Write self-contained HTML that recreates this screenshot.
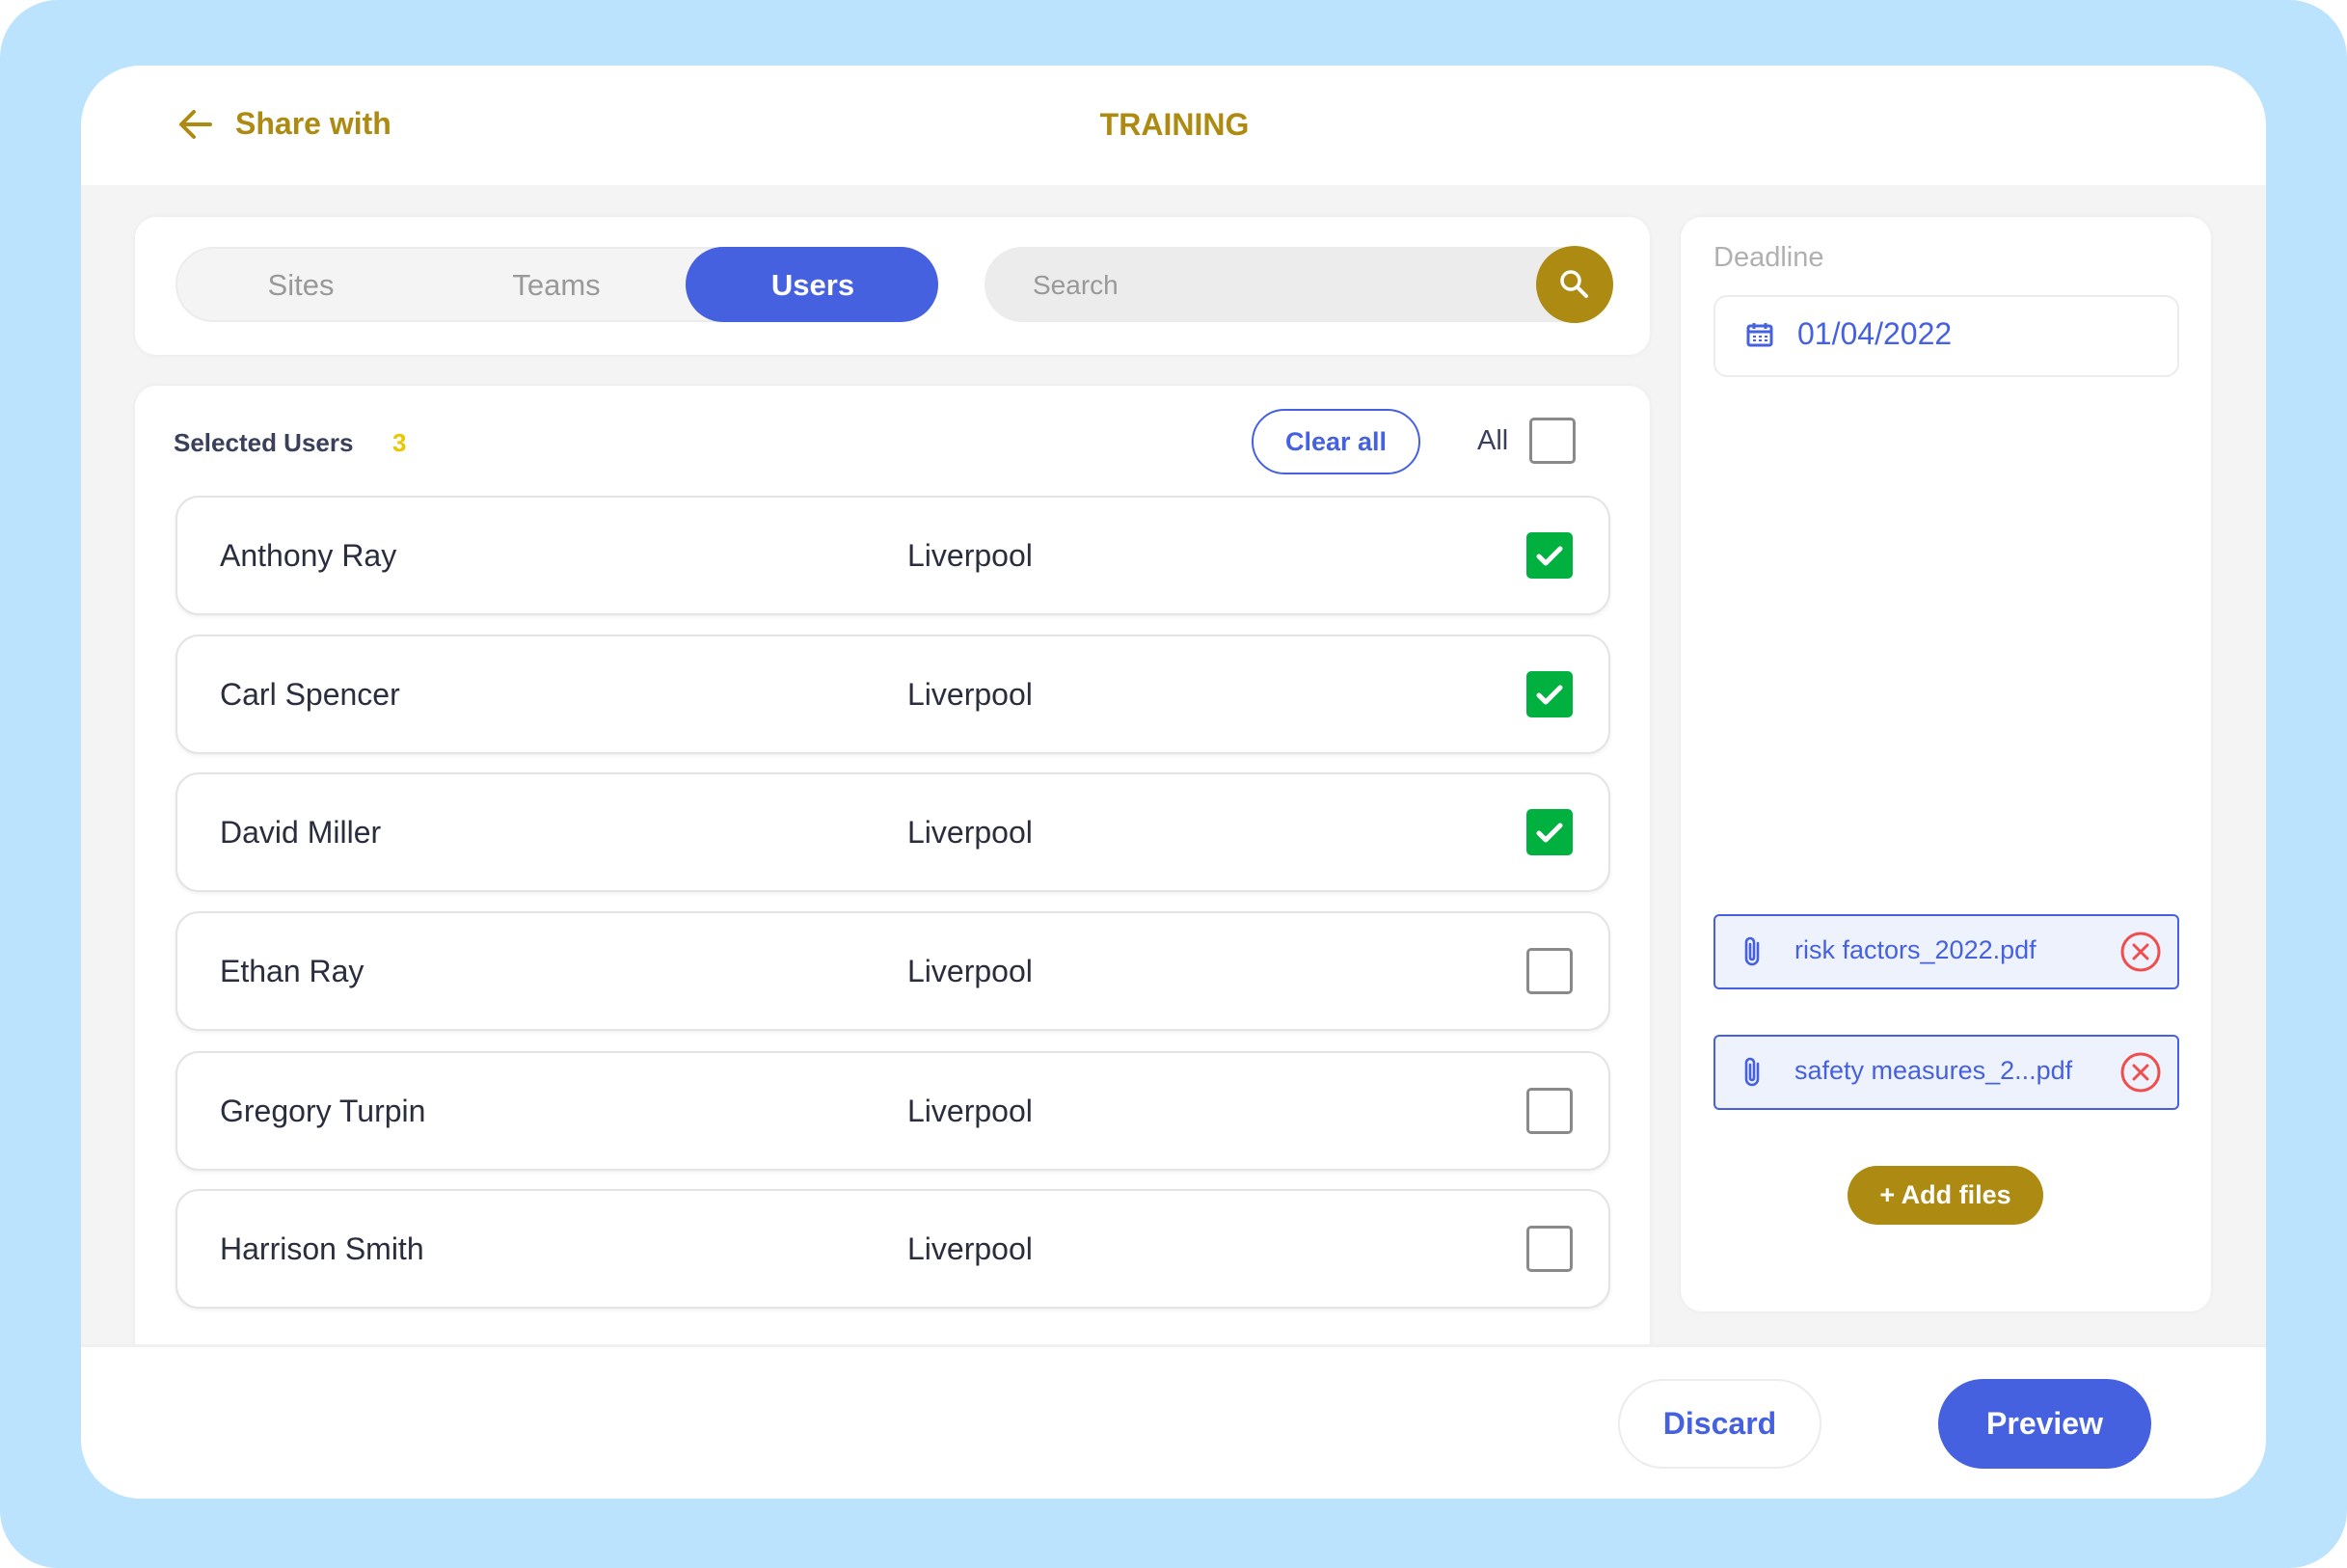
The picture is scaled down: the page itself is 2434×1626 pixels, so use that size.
<!DOCTYPE html>
<html><head><meta charset="utf-8"><style>
*{box-sizing:border-box;margin:0;padding:0}
body{width:2434px;height:1626px;background:#fff;font-family:"Liberation Sans",sans-serif;position:relative;overflow:hidden}
.bg{position:absolute;left:0;top:0;width:2434px;height:1626px;background:#bbe3fd;border-radius:60px}
.abs{position:absolute}
.card{position:absolute;left:84px;top:68px;width:2266px;height:1486px;background:#fff;border-radius:62px;overflow:hidden}
.gray{position:absolute;left:0;top:124px;width:2266px;height:1202px;background:#f4f4f4}
.panel{position:absolute;background:#fff;border-radius:22px;box-shadow:0 0 6px rgba(0,0,0,.05)}
.row{position:absolute;left:182px;width:1488px;height:124px;border:2px solid #e4e4e4;border-radius:24px;background:#fff;box-shadow:0 2px 4px rgba(0,0,0,.06)}
.row .n{position:absolute;left:44px;top:42px;font-size:32px;color:#2a2d3e}
.row .c{position:absolute;left:757px;top:42px;font-size:32px;color:#2a2d3e}
.cb{position:absolute;width:48px;height:48px;border-radius:5px}
.cb.on{background:#00b140}
.cb.off{border:3px solid #8a8a8a;background:#fff}
.file{position:absolute;left:1777px;width:483px;height:78px;background:#eef2fd;border:2px solid #4561e0;border-radius:6px}
.file span{position:absolute;left:82px;top:20px;font-size:27px;color:#4561e0}
</style></head><body>
<div class="bg"></div>
<div class="card">
<div class="gray"></div>
</div>
<!-- header -->
<svg class="abs" style="left:184px;top:112px" width="38" height="34" viewBox="0 0 38 34"><path d="M34 17H5M17 4L4 17l13 13" fill="none" stroke="#ad8b12" stroke-width="4" stroke-linecap="round" stroke-linejoin="round"/></svg>
<div class="abs" style="left:244px;top:110px;font-size:32px;font-weight:bold;color:#ad8b12">Share with</div>
<div class="abs" style="left:1098px;top:111px;width:240px;text-align:center;font-size:32px;font-weight:bold;color:#ad8b12">TRAINING</div>

<!-- top panel -->
<div class="panel" style="left:140px;top:225px;width:1571px;height:143px"></div>
<div class="abs" style="left:182px;top:256px;width:791px;height:78px;background:#f4f4f4;border:2px solid #ececec;border-radius:39px"></div>
<div class="abs" style="left:711px;top:256px;width:262px;height:78px;background:#4561e0;border-radius:39px"></div>
<div class="abs" style="left:212px;top:278px;width:200px;text-align:center;font-size:31px;color:#999">Sites</div>
<div class="abs" style="left:477px;top:278px;width:200px;text-align:center;font-size:31px;color:#999">Teams</div>
<div class="abs" style="left:743px;top:278px;width:200px;text-align:center;font-size:31px;color:#fff;font-weight:bold">Users</div>
<div class="abs" style="left:1021px;top:256px;width:652px;height:78px;background:#ececec;border-radius:39px"></div>
<div class="abs" style="left:1071px;top:280px;font-size:28px;color:#999">Search</div>
<div class="abs" style="left:1593px;top:255px;width:80px;height:80px;border-radius:50%;background:#ad8b12"></div>
<svg class="abs" style="left:1615px;top:277px" width="36" height="36" viewBox="0 0 36 36"><circle cx="14" cy="14" r="9" fill="none" stroke="#fff" stroke-width="3.5"/><path d="M21 21l9 9" stroke="#fff" stroke-width="4" stroke-linecap="round"/></svg>

<!-- list panel -->
<div class="panel" style="left:140px;top:400px;width:1571px;height:1050px"></div>
<div class="abs" style="left:180px;top:444px;font-size:26px;font-weight:bold;color:#3a3f5c">Selected Users</div>
<div class="abs" style="left:407px;top:444px;font-size:26px;font-weight:bold;color:#e8c800">3</div>
<div class="abs" style="left:1298px;top:424px;width:175px;height:68px;border:2px solid #4561e0;border-radius:34px;text-align:center;line-height:64px;font-size:27px;font-weight:bold;color:#4561e0">Clear all</div>
<div class="abs" style="left:1532px;top:441px;font-size:29px;color:#3a3f5c">All</div>
<div class="cb off" style="left:1586px;top:433px"></div>

<div class="row" style="top:514px"><div class="n">Anthony Ray</div><div class="c">Liverpool</div></div>
<div class="row" style="top:658px"><div class="n">Carl Spencer</div><div class="c">Liverpool</div></div>
<div class="row" style="top:801px"><div class="n">David Miller</div><div class="c">Liverpool</div></div>
<div class="row" style="top:945px"><div class="n">Ethan Ray</div><div class="c">Liverpool</div></div>
<div class="row" style="top:1090px"><div class="n">Gregory Turpin</div><div class="c">Liverpool</div></div>
<div class="row" style="top:1233px"><div class="n">Harrison Smith</div><div class="c">Liverpool</div></div>
<svg width="0" height="0" style="position:absolute"><defs><symbol id="ck" viewBox="0 0 48 48"><path d="M13 25l7 7 15-15" fill="none" stroke="#fff" stroke-width="5" stroke-linecap="round" stroke-linejoin="round"/></symbol></defs></svg>
<div class="cb on" style="left:1583px;top:552px"><svg width="48" height="48"><use href="#ck"/></svg></div>
<div class="cb on" style="left:1583px;top:696px"><svg width="48" height="48"><use href="#ck"/></svg></div>
<div class="cb on" style="left:1583px;top:839px"><svg width="48" height="48"><use href="#ck"/></svg></div>
<div class="cb off" style="left:1583px;top:983px"></div>
<div class="cb off" style="left:1583px;top:1128px"></div>
<div class="cb off" style="left:1583px;top:1271px"></div>

<!-- right panel -->
<div class="panel" style="left:1743px;top:225px;width:550px;height:1135px"></div>
<div class="abs" style="left:1777px;top:251px;font-size:29px;color:#b0b0b0">Deadline</div>
<div class="abs" style="left:1777px;top:306px;width:483px;height:85px;border:2px solid #ececec;border-radius:14px"></div>
<svg class="abs" style="left:1811px;top:333px" width="28" height="28" viewBox="0 0 28 28"><rect x="2" y="5" width="24" height="20" rx="2" fill="none" stroke="#4561e0" stroke-width="3"/><path d="M2 11h24M8 2v6M20 2v6" stroke="#4561e0" stroke-width="3"/><path d="M7 16h3M13 16h3M19 16h3M7 20h3M13 20h3M19 20h3" stroke="#4561e0" stroke-width="2"/></svg>
<div class="abs" style="left:1864px;top:328px;font-size:32px;color:#4561e0">01/04/2022</div>

<div class="file" style="top:948px"><span>risk factors_2022.pdf</span></div>
<div class="file" style="top:1073px"><span>safety measures_2...pdf</span></div>
<svg width="0" height="0" style="position:absolute"><defs>
<symbol id="clip" viewBox="0 0 24 34"><path d="M18 8v16a6 6 0 0 1-12 0V7a4 4 0 0 1 8 0v16a2 2 0 0 1-4 0V9" fill="none" stroke="#4561e0" stroke-width="2.6" stroke-linecap="round"/></symbol>
<symbol id="xc" viewBox="0 0 44 44"><circle cx="22" cy="22" r="19" fill="none" stroke="#f04d4d" stroke-width="3"/><path d="M15 15l14 14M29 15L15 29" stroke="#f04d4d" stroke-width="3" stroke-linecap="round"/></symbol></defs></svg>
<svg class="abs" style="left:1805px;top:970px" width="24" height="34"><use href="#clip"/></svg>
<svg class="abs" style="left:1805px;top:1095px" width="24" height="34"><use href="#clip"/></svg>
<svg class="abs" style="left:2198px;top:965px" width="44" height="44"><use href="#xc"/></svg>
<svg class="abs" style="left:2198px;top:1090px" width="44" height="44"><use href="#xc"/></svg>
<div class="abs" style="left:1916px;top:1209px;width:203px;height:61px;border-radius:31px;background:#ad8b12;color:#fff;font-size:27px;font-weight:bold;text-align:center;line-height:61px">+ Add files</div>

<!-- footer -->
<div class="abs" style="left:84px;top:1394px;width:2266px;height:160px;background:#fff;border-top:3px solid #f0f0f0;border-radius:0 0 62px 62px"></div>
<div class="abs" style="left:1678px;top:1430px;width:211px;height:93px;border:2px solid #ececec;border-radius:47px;text-align:center;line-height:89px;font-size:32px;font-weight:bold;color:#4561e0">Discard</div>
<div class="abs" style="left:2010px;top:1430px;width:221px;height:93px;background:#4561e0;border-radius:47px;text-align:center;line-height:93px;font-size:32px;font-weight:bold;color:#fff">Preview</div>
</body></html>
